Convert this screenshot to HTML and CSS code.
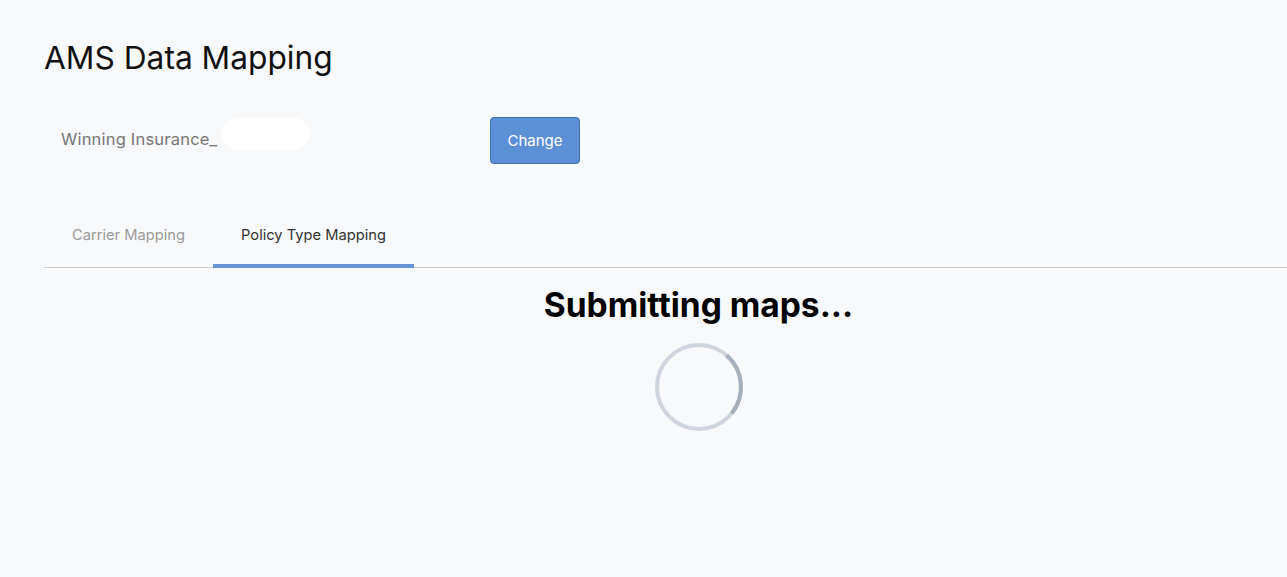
FILE: index.html
```html
<!DOCTYPE html>
<html lang="en">
<head>
  <meta charset="UTF-8" />
  <title>AMS Data Mapping</title>
  <link rel="stylesheet" href="styles.css">
</head>
<body>
  <div class="page">
    <h1>AMS Data Mapping</h1>

    <div class="agency-row">
      <div class="agency-name">Winning Insurance_<span class="redacted"></span></div>
      <button class="change-btn">Change</button>
    </div>

    <div class="tabs">
      <div class="tab">Carrier Mapping</div>
      <div class="tab active">Policy Type Mapping</div>
    </div>

    <div class="loading">
      <h2>Submitting maps...</h2>
      <svg class="spinner" width="92" height="92" viewBox="0 0 92 92">
        <circle cx="46" cy="46" r="42" fill="none" stroke="#cfd5dd" stroke-width="4" />
        <path d="M73.6 14.3 A42 42 0 0 1 78.6 72.4" fill="none" stroke="#a7afbc" stroke-width="4" />
      </svg>
    </div>
  </div>
</body>
</html>
```

FILE: styles.css
```css
body {
  font-family: Inter, 'Noto Sans', sans-serif;
  background-color: #f8f9fb;
  margin: 0;
}

.page {
  padding: 38px 0 0 44px;
}

h1 {
  margin: 0;
  font-size: 31.7px;
  font-weight: 400;
  color: #111;
  line-height: 40px;
}

.agency-row {
  display: flex;
  align-items: center;
  margin-top: 39px;
  padding-left: 17px;
}

.agency-name {
  width: 429px;
  font-size: 16.5px;
  letter-spacing: 0.2px;
  color: #777;
  position: relative;
  top: -2px;
}

.redacted {
  position: absolute;
  left: 161px;
  top: -11px;
  width: 88px;
  height: 32px;
  background: #fff;
  border-radius: 16px;
}

.change-btn {
  background-color: #5b8fd6;
  border: 1px solid #3f6fb0;
  color: white;
  font-family: inherit;
  font-size: 15px;
  width: 90px;
  height: 47px;
  border-radius: 4px;
  cursor: pointer;
}

.tabs {
  display: flex;
  margin-top: 52px;
  border-bottom: 1px solid #cccccc;
}

.tab {
  padding: 10px 28px 20px;
  font-size: 14.7px;
  color: #999;
  border-bottom: 4px solid transparent;
  margin-bottom: -1px;
}

.tab.active {
  color: #333;
  border-bottom-color: #6495d8;
}

.loading {
  display: flex;
  flex-direction: column;
  align-items: center;
  padding-left: 66px;
}

.loading h2 {
  margin: 17px 0 0;
  font-size: 33.5px;
  font-weight: 700;
  color: #000;
}

.spinner {
  margin-top: 16px;
}
```
